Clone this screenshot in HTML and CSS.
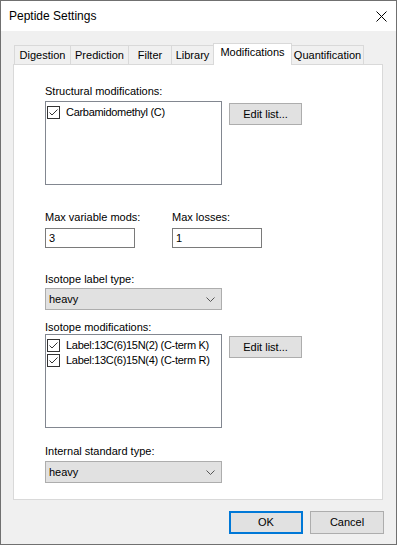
FILE: index.html
```html
<!DOCTYPE html>
<html lang="en">
<head>
    <meta charset="UTF-8">
    <title>Peptide Settings</title>
    <link rel="stylesheet" href="styles.css">
</head>
<body>
    <div class="dialog">
        <div class="titlebar">
            <span class="title">Peptide Settings</span>
            <svg class="close" width="11" height="11" viewBox="0 0 11 11">
                <path d="M0.5 0.5 L10.5 10.5 M10.5 0.5 L0.5 10.5" stroke="#000" stroke-width="1" fill="none"/>
            </svg>
        </div>
        <div class="client">
            <div class="tabs">
                <div class="tab tab-digestion">Digestion</div>
                <div class="tab tab-prediction">Prediction</div>
                <div class="tab tab-filter">Filter</div>
                <div class="tab tab-library">Library</div>
                <div class="tab tab-active">Modifications</div>
                <div class="tab tab-quant">Quantification</div>
            </div>
            <div class="panel">
                <div class="label label-struct">Structural modifications:</div>
                <div class="list-row">
                    <div class="listbox listbox-struct">
                        <div class="item">
                            <svg class="check" width="13" height="13" viewBox="0 0 13 13">
                                <rect x="0.5" y="0.5" width="12" height="12" fill="#fff" stroke="#333"/>
                                <path d="M2.5 6.5 L5 9 L10.5 3.5" fill="none" stroke="#333"/>
                            </svg>
                            <span>Carbamidomethyl (C)</span>
                        </div>
                    </div>
                    <div class="btn btn-edit">Edit list...</div>
                </div>

                <div class="pair">
                    <div class="pair-col col-mods">
                        <div class="label">Max variable mods:</div>
                        <div class="textbox">3</div>
                    </div>
                    <div class="pair-col">
                        <div class="label">Max losses:</div>
                        <div class="textbox">1</div>
                    </div>
                </div>

                <div class="label label-type">Isotope label type:</div>
                <div class="combo combo-type">
                    <span>heavy</span>
                    <svg width="9" height="5" viewBox="0 0 9 5">
                        <path d="M0.5 0.5 L4.5 4.5 L8.5 0.5" fill="none" stroke="#555"/>
                    </svg>
                </div>

                <div class="label label-iso">Isotope modifications:</div>
                <div class="list-row">
                    <div class="listbox listbox-iso">
                        <div class="item">
                            <svg class="check" width="13" height="13" viewBox="0 0 13 13">
                                <rect x="0.5" y="0.5" width="12" height="12" fill="#fff" stroke="#333"/>
                                <path d="M2.5 6.5 L5 9 L10.5 3.5" fill="none" stroke="#333"/>
                            </svg>
                            <span>Label:13C(6)15N(2) (C-term K)</span>
                        </div>
                        <div class="item">
                            <svg class="check" width="13" height="13" viewBox="0 0 13 13">
                                <rect x="0.5" y="0.5" width="12" height="12" fill="#fff" stroke="#333"/>
                                <path d="M2.5 6.5 L5 9 L10.5 3.5" fill="none" stroke="#333"/>
                            </svg>
                            <span>Label:13C(6)15N(4) (C-term R)</span>
                        </div>
                    </div>
                    <div class="btn btn-edit">Edit list...</div>
                </div>

                <div class="label label-std">Internal standard type:</div>
                <div class="combo combo-std">
                    <span>heavy</span>
                    <svg width="9" height="5" viewBox="0 0 9 5">
                        <path d="M0.5 0.5 L4.5 4.5 L8.5 0.5" fill="none" stroke="#555"/>
                    </svg>
                </div>
            </div>
            <div class="footer">
                <div class="btn btn-ok">OK</div>
                <div class="btn btn-cancel">Cancel</div>
            </div>
        </div>
    </div>
</body>
</html>
```

FILE: styles.css
```css
html,body{
    margin: 0;
}
body{
    width: 397px;
    height: 545px;
    font-family: "Liberation Sans", Arial, sans-serif;
    font-size: 11px;
    line-height: 13px;
    color: #000;
}
.dialog{
    box-sizing: border-box;
    width: 397px;
    height: 545px;
    border: 1px solid #707070;
    background-color: #f0f0f0;
}
.titlebar{
    height: 30px;
    padding: 0 9px 0 8px;
    background-color: #fff;
    display: flex;
    align-items: center;
    justify-content: space-between;
}
.title{
    font-size: 12px;
    line-height: 14px;
}
.client{
    padding: 12px 12px 0 12px;
}

/* tabs */
.tabs{
    display: flex;
    align-items: flex-end;
    height: 21px;
    padding-left: 1px;
}
.tab{
    box-sizing: border-box;
    height: 19px;
    margin-right: -1px;
    border: 1px solid #d9d9d9;
    border-bottom: none;
    background-color: #f0f0f0;
    text-align: center;
    line-height: 19px;
}
.tab-digestion{ width: 57px; }
.tab-prediction{ width: 59px; }
.tab-filter{ width: 44px; }
.tab-library{ width: 43px; }
.tab-active{
    position: relative;
    z-index: 2;
    width: 79px;
    height: 22px;
    margin-bottom: -1px;
    background-color: #fff;
    line-height: 17px;
}
.tab-quant{ width: 73px; }

.panel{
    box-sizing: border-box;
    width: 370px;
    height: 436px;
    padding: 20px 0 0 31px;
    border: 1px solid #d9d9d9;
    background-color: #fff;
}

.label{
    height: 13px;
}
.list-row{
    display: flex;
    align-items: flex-start;
    gap: 7px;
    margin-top: 3px;
}
.listbox{
    box-sizing: border-box;
    width: 177px;
    padding: 2px 0 0 1px;
    border: 1px solid #828790;
    background-color: #fff;
}
.listbox-struct{ height: 84px; }
.listbox-iso{ height: 94px; }
.item{
    display: flex;
    align-items: center;
    gap: 6px;
    height: 14px;
    margin-top: 1px;
    letter-spacing: -0.3px;
}
.check{
    flex: none;
}

.btn{
    box-sizing: border-box;
    height: 22px;
    border: 1px solid #adadad;
    background-color: #e1e1e1;
    text-align: center;
    line-height: 20px;
}
.btn-edit{
    width: 73px;
    margin-top: 2px;
}

.pair{
    display: flex;
    margin-top: 26px;
}
.col-mods{
    width: 127px;
}
.textbox{
    box-sizing: border-box;
    width: 90px;
    height: 20px;
    margin-top: 4px;
    padding-left: 3px;
    border: 1px solid #7a7a7a;
    background-color: #fff;
    line-height: 18px;
}

.label-type{ margin-top: 25px; }
.label-iso{ margin-top: 11px; }
.label-std{ margin-top: 17px; }
.label-iso + .list-row{ margin-top: 0; }

.combo{
    box-sizing: border-box;
    width: 177px;
    height: 22px;
    padding: 0 6px 0 3px;
    border: 1px solid #adadad;
    background-color: #e1e1e1;
    display: flex;
    align-items: center;
    justify-content: space-between;
}
.combo-type{ margin-top: 2px; }
.combo-std{ margin-top: 3px; }

.footer{
    display: flex;
    justify-content: flex-end;
    gap: 7px;
    padding-top: 11px;
}
.btn-ok,
.btn-cancel{
    width: 74px;
    height: 23px;
    line-height: 21px;
}
.btn-ok{
    border: 2px solid #0078d7;
    line-height: 19px;
}
```
